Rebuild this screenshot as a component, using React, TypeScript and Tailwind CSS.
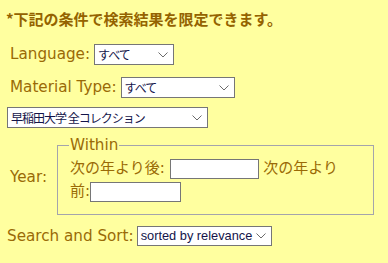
import React from "react";

// 検索条件パネル（絞り込み）

const LABEL_FONT = "font-['DejaVu_Sans','Noto_Sans_CJK_JP',sans-serif]";

function Chevron() {
  return (
    <svg
      width="10"
      height="6"
      viewBox="0 0 10 6"
      className="pointer-events-none absolute right-[5px] top-1/2 -translate-y-1/2"
    >
      <path d="M0.5 0.5 L5 5 L9.5 0.5" fill="none" stroke="#6b6b6b" strokeWidth="1" />
    </svg>
  );
}

// ドロップダウン（見た目だけ）
function Select({ className, textClass, value }: { className: string; textClass: string; value: string }) {
  return (
    <div
      role="combobox"
      className={
        "relative flex shrink-0 items-center border border-[#767676] bg-white pl-[3px] text-[#14144a] whitespace-pre " +
        className
      }
    >
      <span className={textClass}>{value}</span>
      <Chevron />
    </div>
  );
}

const JA = "font-['Noto_Sans_CJK_JP',sans-serif] text-[12px] leading-[16px] tracking-[-1px]";
const EN = "font-['Liberation_Sans',Arial,sans-serif] text-[12.8px] leading-[16px]";

export default function App() {
  return (
    <div className={"min-h-screen w-full bg-[#ffff9f] text-[#9a6a06] text-[15.2px] " + LABEL_FONT}>
      <p className="pl-[6px] pt-[8px] text-[15px] font-bold leading-[22px] text-[#946300] font-['Noto_Sans_CJK_JP',sans-serif]">
        *下記の条件で検索結果を限定できます。
      </p>

      {/* Language */}
      <div className="ml-[10px] mt-[14px] flex h-[21px] items-center gap-[4px]">
        <span>Language:</span>
        <Select className="h-[21px] w-[80px]" textClass={JA} value="すべて" />
      </div>

      {/* Material Type */}
      <div className="ml-[10px] mt-[12px] flex h-[21px] items-center gap-[4px]">
        <span>Material Type:</span>
        <Select className="h-[21px] w-[114px]" textClass={JA} value="すべて" />
      </div>

      {/* コレクション */}
      <div className="ml-[7px] mt-[9px] flex">
        <Select className="h-[21px] w-[201px]" textClass={JA} value="早稲田大学 全コレクション" />
      </div>

      {/* Year */}
      <div className="ml-[10px] mt-[8px] flex items-center gap-[10px]">
        <span className="pt-[4px]">Year:</span>
        <fieldset className="m-0 w-[317px] border border-[#a4a4ac] pb-[11px] pl-[12px] pr-[20px] pt-[3px]">
          <legend className="-ml-[1px] px-[1px] leading-[18px]">Within</legend>
          <div className="text-[15px] leading-[23px]">
            <span>次の年より後:</span>{" "}
            <input type="text" className="box-border inline-block h-[20px] w-[89px] border border-[#767676] bg-white align-middle" />{" "}
            <span>次の年より</span>
            <span>前:</span>
            <input type="text" className="box-border inline-block h-[20px] w-[91px] border border-[#767676] bg-white align-middle" />
          </div>
        </fieldset>
      </div>

      {/* Search and Sort */}
      <div className="ml-[7px] mt-[11px] flex h-[20px] items-center gap-[3px]">
        <span>Search and Sort:</span>
        <Select className="h-[20px] w-[135px]" textClass={EN} value="sorted by relevance" />
      </div>
    </div>
  );
}
